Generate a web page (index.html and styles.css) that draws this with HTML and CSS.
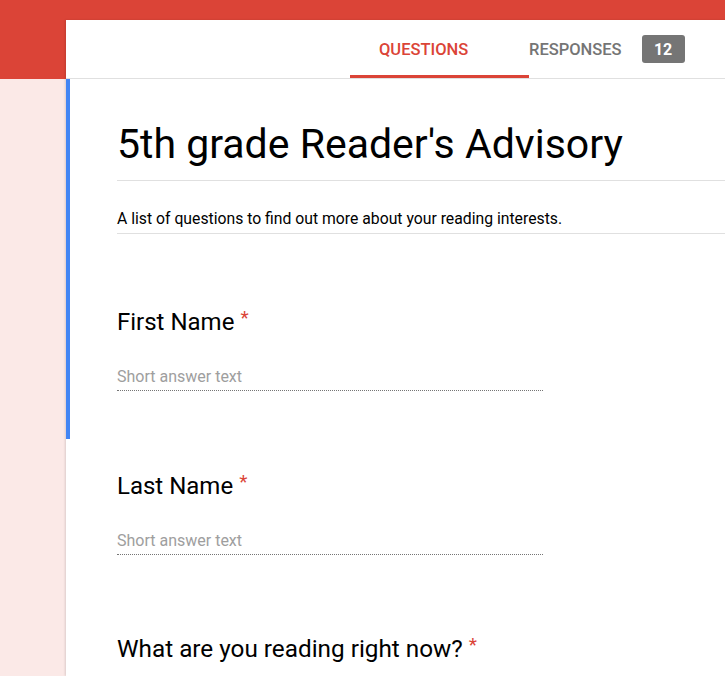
FILE: index.html
```html
<!DOCTYPE html>
<html>
<head>
<meta charset="utf-8">
<link rel="stylesheet" href="styles.css">
</head>
<body>
<div class="page">
  <div class="side">
    <div class="side-top"></div>
    <div class="side-rest"></div>
  </div>
  <div class="main">
    <div class="topstrip"></div>
    <div class="card">
      <div class="tabs">
        <div class="tab active">QUESTIONS</div>
        <div class="tab">RESPONSES</div>
        <div class="badge">12</div>
      </div>
      <div class="section selected">
        <div class="form-title">5th grade Reader's Advisory</div>
        <div class="form-desc">A list of questions to find out more about your reading interests.</div>
        <div class="question q1">
          <div class="q-title">First Name<span class="req">*</span></div>
          <div class="answer">Short answer text</div>
        </div>
      </div>
      <div class="section">
        <div class="question q2">
          <div class="q-title">Last Name<span class="req">*</span></div>
          <div class="answer">Short answer text</div>
        </div>
        <div class="question q3">
          <div class="q-title">What are you reading right now?<span class="req">*</span></div>
        </div>
      </div>
    </div>
  </div>
</div>
</body>
</html>
```

FILE: styles.css
```css
* { box-sizing: border-box; }
html, body { margin: 0; padding: 0; }
body {
  font-family: Roboto, "Liberation Sans", sans-serif;
  background: #fbe9e7;
  overflow: hidden;
  height: 676px;
}
.page {
  display: flex;
  width: 725px;
  height: 676px;
  overflow: hidden;
}
.side {
  width: 66px;
  flex: none;
  display: flex;
  flex-direction: column;
}
.side-top {
  height: 79px;
  background: #db4437;
}
.side-rest {
  flex: 1;
  background: #fbe9e7;
}
.main {
  flex: 1;
  display: flex;
  flex-direction: column;
  min-width: 0;
}
.topstrip {
  height: 20px;
  background: #db4437;
  flex: none;
}
.card {
  flex: 1;
  background: #fff;
  width: 700px;
  box-shadow: -1px 0 2px rgba(0,0,0,0.12);
}
.tabs {
  height: 59px;
  border-bottom: 1px solid #e0e0e0;
  display: flex;
  align-items: stretch;
  padding-left: 284px;
}
.tab {
  display: flex;
  align-items: center;
  font-size: 16.5px;
  font-weight: 500;
  color: #757575;
}
.tab.active {
  width: 179px;
  padding-left: 29px;
  color: #db4437;
  border-bottom: 3px solid #db4437;
  padding-top: 3px;
}
.badge {
  align-self: center;
  margin-left: 20px;
  width: 43px;
  height: 28px;
  background: #757575;
  color: #fff;
  border-radius: 3px;
  font-weight: 700;
  font-size: 16px;
  display: flex;
  align-items: center;
  justify-content: center;
}
.section {
  border-left: 4px solid transparent;
  padding-left: 47px;
}
.section.selected {
  border-left-color: #4285f4;
  height: 360px;
  padding-top: 41px;
}
.form-title {
  font-size: 41px;
  line-height: 48px;
  color: #000;
  padding-bottom: 12px;
  border-bottom: 1px solid #e0e0e0;
  white-space: nowrap;
}
.form-desc {
  margin-top: 28px;
  font-size: 15.75px;
  line-height: 20px;
  color: #000;
  padding-bottom: 4px;
  border-bottom: 1px solid #e0e0e0;
  white-space: nowrap;
}
.q1 { padding-top: 74px; }
.q2 { padding-top: 33px; }
.q3 { padding-top: 80px; }
.q-title {
  font-size: 24px;
  line-height: 28px;
  color: #000;
  white-space: nowrap;
}
.q3 .q-title { font-size: 24.3px; }
.req {
  color: #db4437;
  font-size: 19px;
  margin-left: 6px;
  vertical-align: top;
  line-height: 20px;
}
.answer {
  margin-top: 31px;
  width: 426px;
  font-size: 16px;
  line-height: 20px;
  color: #9e9e9e;
  padding-bottom: 3px;
  border-bottom: 1px dotted #757575;
}
```
